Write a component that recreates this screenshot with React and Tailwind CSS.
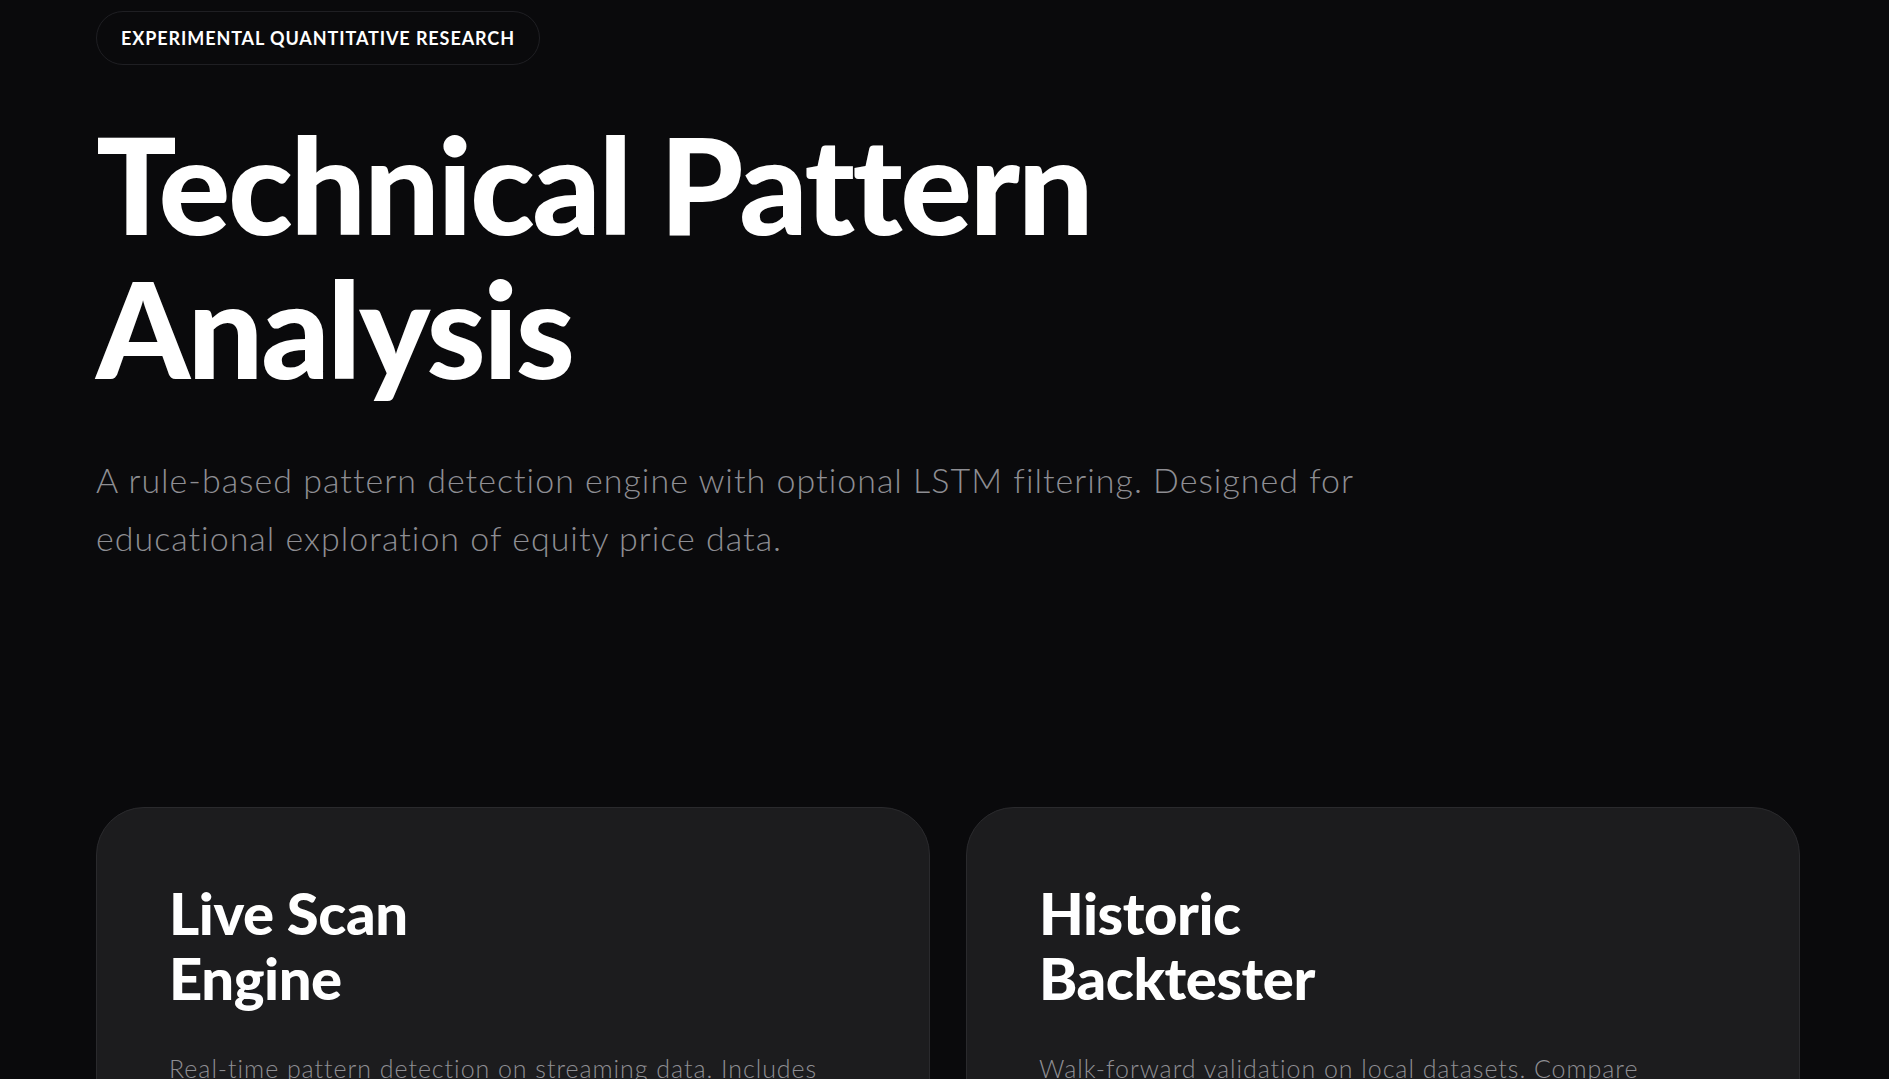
export default function App() {
  const cards = [
    {
      title: ["Live Scan", "Engine"],
      body: "Real-time pattern detection on streaming data. Includes confidence scoring and configurable alert thresholds for every symbol.",
    },
    {
      title: ["Historic", "Backtester"],
      body: "Walk-forward validation on local datasets. Compare detected patterns against forward returns and simple benchmarks.",
    },
  ];

  return (
    <div className="min-h-screen bg-[#0a0a0c] font-[Lato,sans-serif] text-white">
      <main className="pl-24 pt-[11px] pb-24">
        <span className="inline-flex items-center rounded-full border border-[#1f1f23] px-6 py-3 text-[18px] leading-7 font-bold tracking-[0.05em] text-white">
          EXPERIMENTAL QUANTITATIVE RESEARCH
        </span>

        <h1 className="mt-[47px] text-[134px] leading-[144px] font-black tracking-[-0.018em] text-white">
          Technical Pattern
          <br />
          Analysis
        </h1>

        <p className="mt-[51px] max-w-[1320px] text-[34px] leading-[58px] font-light tracking-[1px] text-[#8e8e93]">
          A rule-based pattern detection engine with optional LSTM filtering. Designed for educational exploration of equity price data.
        </p>

        <section className="mt-60 grid w-[1704px] grid-cols-2 gap-9">
          {cards.map((card) => (
            <article
              key={card.title.join(" ")}
              className="rounded-[48px] border border-[#2a2a2d] bg-[#1c1c1e] p-18"
            >
              <h2 className="text-[58px] leading-[65px] font-black tracking-[-0.008em] text-white">
                {card.title[0]}
                <br />
                {card.title[1]}
              </h2>
              <p className="mt-[38px] text-[25px] leading-10 font-light tracking-[0.95px] text-[#8e8e93]">
                {card.body}
              </p>
            </article>
          ))}
        </section>
      </main>
    </div>
  );
}
